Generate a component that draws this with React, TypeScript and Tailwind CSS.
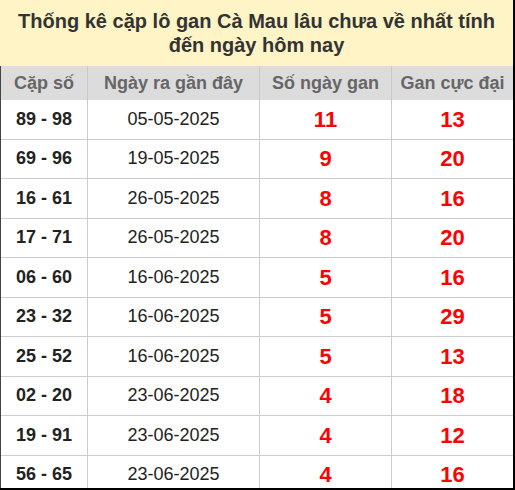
const ROWS = [
  ['89 - 98', '05-05-2025', '11', '13'],
  ['69 - 96', '19-05-2025', '9', '20'],
  ['16 - 61', '26-05-2025', '8', '16'],
  ['17 - 71', '26-05-2025', '8', '20'],
  ['06 - 60', '16-06-2025', '5', '16'],
  ['23 - 32', '16-06-2025', '5', '29'],
  ['25 - 52', '16-06-2025', '5', '13'],
  ['02 - 20', '23-06-2025', '4', '18'],
  ['19 - 91', '23-06-2025', '4', '12'],
  ['56 - 65', '23-06-2025', '4', '16'],
];

const HEADERS = ['Cặp số', 'Ngày ra gần đây', 'Số ngày gan', 'Gan cực đại'];

const cols = 'grid grid-cols-[86px_172px_132px_1fr]';

export default function App() {
  return (
    <div
      className="w-[515px] h-[490px] bg-white border-r-2 border-b-2 border-black overflow-hidden"
      style={{ fontFamily: '"Liberation Sans", Arial, sans-serif' }}
    >
      {/* Title */}
      <div className="h-[66px] bg-[#fff4c6] flex items-center justify-center px-3 text-center">
        <h1 className="text-[20px] leading-[24px] font-bold text-[#333]">
          Thống kê cặp lô gan Cà Mau lâu chưa về nhất tính
          <br />
          đến ngày hôm nay
        </h1>
      </div>

      <div className="border-l border-[#444]">
        {/* Header */}
        <div className={`${cols} h-[34px] bg-[#dcdcdc]`}>
          {HEADERS.map((h, i) => (
            <div
              key={h}
              className={`flex items-center justify-center text-[18px] font-bold text-[#666] ${i > 0 ? 'border-l border-[#c8c8c8]' : ''}`}
            >
              {h}
            </div>
          ))}
        </div>

        {/* Body */}
        {ROWS.map((r) => (
          <div key={r[0]} className={`${cols} h-[39.5px] border-b border-[#cccccc]`}>
            <div className="flex items-center justify-center text-[18px] font-bold text-[#222]">{r[0]}</div>
            <div className="flex items-center justify-center text-[18px] text-[#222] border-l border-[#cccccc]">{r[1]}</div>
            <div className="flex items-center justify-center text-[22px] font-bold text-[#ff0000] border-l border-[#cccccc]">{r[2]}</div>
            <div className="flex items-center justify-center text-[22px] font-bold text-[#ff0000] border-l border-[#cccccc]">{r[3]}</div>
          </div>
        ))}
      </div>
    </div>
  );
}
